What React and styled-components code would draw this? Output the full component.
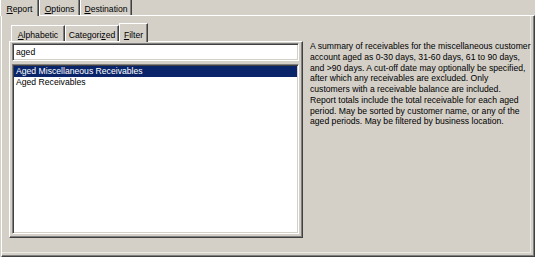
import styled, { createGlobalStyle } from "styled-components";

const GlobalStyle = createGlobalStyle`
  body {
    margin: 0;
    background: #d4d0c8;
    font-family: "Liberation Sans", Arial, sans-serif;
  }
`;

const Window = styled.div`
  width: 535px;
  height: 257px;
  overflow: hidden;
  display: flex;
  flex-direction: column;
  font-size: 8.65px;
  color: #000;
  background: #d4d0c8;
`;

const TabStrip = styled.div`
  display: flex;
  align-items: flex-end;
  height: ${(p) => p.$h}px;
  padding-left: ${(p) => p.$pad}px;
  flex-shrink: 0;
`;

const Tab = styled.div`
  position: relative;
  z-index: 1;
  box-sizing: border-box;
  width: ${(p) => p.$w}px;
  height: ${(p) => p.$h}px;
  margin-bottom: ${(p) => (p.$active ? -1 : 0)}px;
  background: #d4d0c8;
  border-top: 1px solid #fff;
  border-left: 1px solid #fff;
  border-right: 1px solid #404040;
  box-shadow: inset -1px 0 #808080;
  display: flex;
  align-items: flex-end;
  justify-content: center;
  padding-bottom: ${(p) => p.$pb}px;
  line-height: 10px;
  white-space: nowrap;

  u {
    text-decoration: underline;
    text-underline-offset: 1px;
  }
`;

const OuterPanel = styled.div`
  box-sizing: border-box;
  margin-left: 1px;
  width: 534px;
  height: 242px;
  border-top: 1px solid #fff;
  border-left: 1px solid #fff;
  border-right: 1px solid #404040;
  border-bottom: 1px solid #404040;
  box-shadow: inset -1px -1px #808080, inset -3px -3px #d4d0c8, inset -4px -4px #ebe9e4;
  padding: 7px 0 0 7px;
  display: flex;
  gap: 7px;
`;

const LeftColumn = styled.div`
  width: 294px;
  flex-shrink: 0;
  display: flex;
  flex-direction: column;
`;

const InnerPanel = styled.div`
  box-sizing: border-box;
  height: 197px;
  border-top: 1px solid #fff;
  border-left: 1px solid #fff;
  border-right: 1px solid #404040;
  border-bottom: 1px solid #404040;
  box-shadow: inset -1px -1px #808080;
  padding: 1px 3px 0 2px;
  display: flex;
  flex-direction: column;
  gap: 3px;
`;

const Sunken = styled.div`
  box-sizing: border-box;
  background: #fff;
  border: 1px solid;
  border-color: #808080 #fff #fff #808080;
  box-shadow: inset 1px 1px #404040, inset -1px -1px #d4d0c8;
`;

const SearchBox = styled(Sunken)`
  height: 18px;
  padding: 0 3px;
  display: flex;
  align-items: center;
`;

const ListBox = styled(Sunken)`
  height: 170px;
  padding: 1px;
`;

const ListItem = styled.div`
  height: 10.7px;
  line-height: 10.7px;
  padding-left: 2px;
  white-space: nowrap;
  background: ${(p) => (p.$selected ? "#0a246a" : "transparent")};
  color: ${(p) => (p.$selected ? "#fff" : "#000")};
`;

const Description = styled.p`
  margin: 0;
  padding-top: 18px;
  white-space: nowrap;
  line-height: 10.75px;
`;

export default function App() {
  return (
    <>
      <GlobalStyle />
      <Window>
        <TabStrip $h={15} $pad={0}>
          <Tab $active $w={39} $h={18} $pb={2}>
            <span><u>R</u>eport</span>
          </Tab>
          <Tab $w={41} $h={17} $pb={1}>
            <span><u>O</u>ptions</span>
          </Tab>
          <Tab $w={52} $h={17} $pb={1}>
            <span><u>D</u>estination</span>
          </Tab>
        </TabStrip>
        <OuterPanel>
          <LeftColumn>
            <TabStrip $h={18} $pad={2}>
              <Tab $w={54} $h={16} $pb={1}>
                <span><u>A</u>lphabetic</span>
              </Tab>
              <Tab $w={54} $h={16} $pb={1}>
                <span>Categori<u>z</u>ed</span>
              </Tab>
              <Tab $active $w={29} $h={19} $pb={2}>
                <span><u>F</u>ilter</span>
              </Tab>
            </TabStrip>
            <InnerPanel>
              <SearchBox>aged</SearchBox>
              <ListBox>
                <ListItem $selected>Aged Miscellaneous Receivables</ListItem>
                <ListItem>Aged Receivables</ListItem>
              </ListBox>
            </InnerPanel>
          </LeftColumn>
          <Description>
            A summary of receivables for the miscellaneous customer
            <br />
            account aged as 0-30 days, 31-60 days, 61 to 90 days,
            <br />
            and &gt;90 days. A cut-off date may optionally be specified,
            <br />
            after which any receivables are excluded. Only
            <br />
            customers with a receivable balance are included.
            <br />
            Report totals include the total receivable for each aged
            <br />
            period. May be sorted by customer name, or any of the
            <br />
            aged periods. May be filtered by business location.
          </Description>
        </OuterPanel>
      </Window>
    </>
  );
}
